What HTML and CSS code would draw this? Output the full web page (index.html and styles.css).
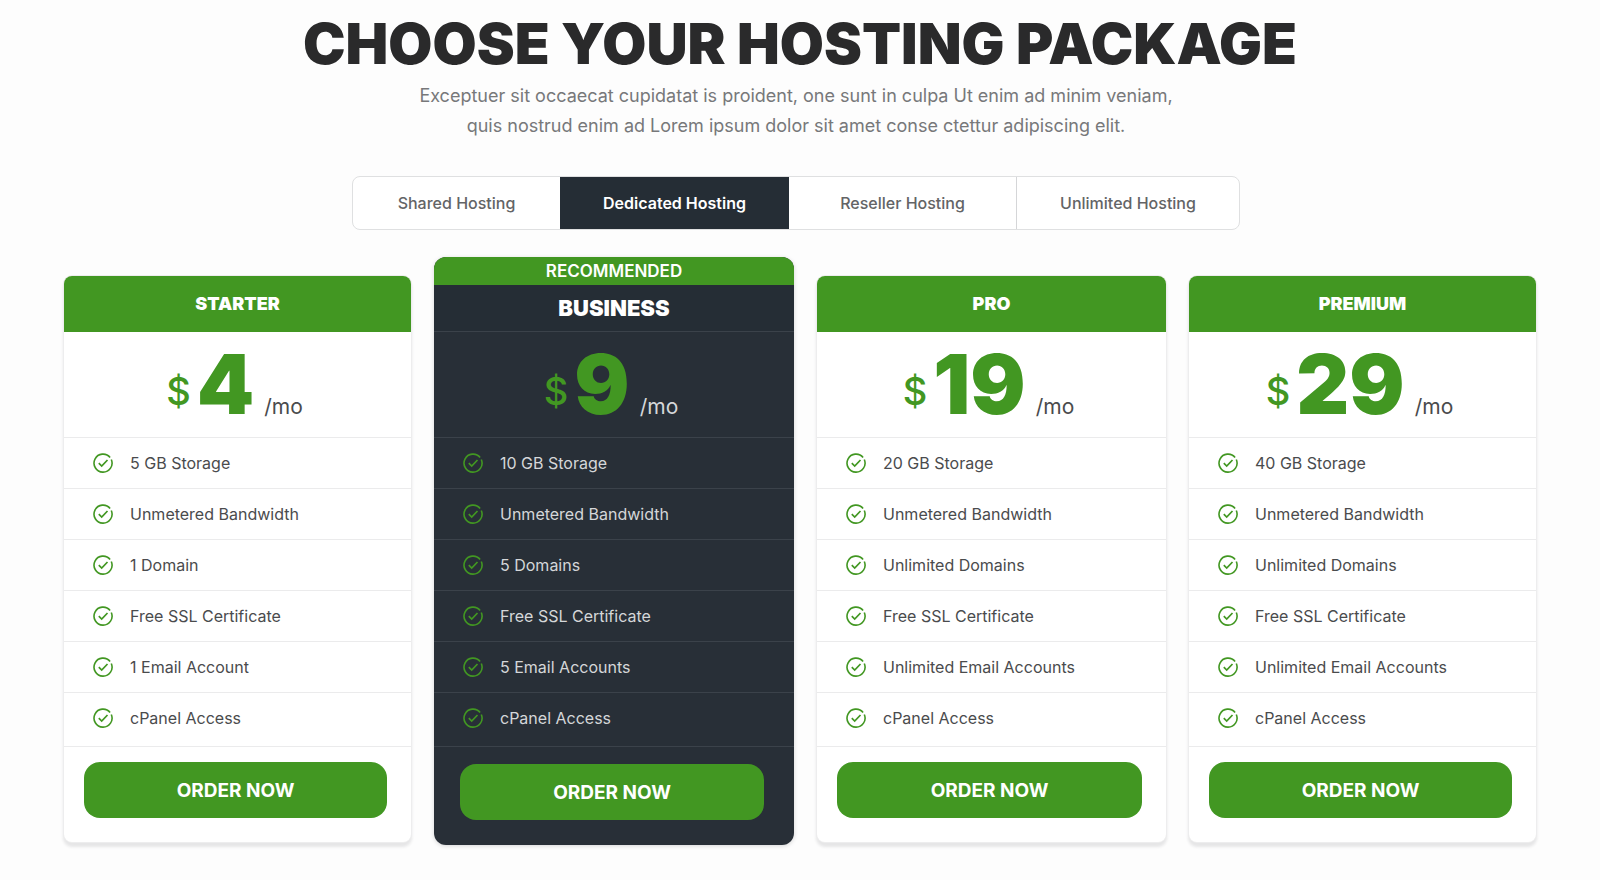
FILE: index.html
```
<!DOCTYPE html>
<html lang="en">
<head>
    <meta charset="UTF-8">
    <meta name="viewport" content="width=device-width, initial-scale=1.0">
    <title>Hosting Packages</title>
    <link rel="stylesheet" href="styles.css">
</head>
<body>
    <!-- Check icon shared by all feature rows -->
    <svg class="sprite" aria-hidden="true">
        <symbol id="check" viewBox="0 0 20 20">
            <path d="M18.3 6.5A9 9 0 1 1 17.1 4.5" fill="none" stroke="currentColor" stroke-width="1.6"/>
            <path d="M5.8 10.2l2.9 2.8 5.8-6" fill="none" stroke="currentColor" stroke-width="1.7"/>
        </symbol>
    </svg>

    <div class="wrapper">
        <h1>CHOOSE YOUR HOSTING PACKAGE</h1>

        <div class="intro">
            <p>Exceptuer sit occaecat cupidatat is proident, one sunt in culpa Ut enim ad minim veniam,<br>
            quis nostrud enim ad Lorem ipsum dolor sit amet conse ctettur adipiscing elit.</p>

            <div class="tabs">
                <button class="tab">Shared Hosting</button>
                <button class="tab tab-active">Dedicated Hosting</button>
                <button class="tab">Reseller Hosting</button>
                <button class="tab">Unlimited Hosting</button>
            </div>
        </div>

        <div class="plans">
            <!-- Starter -->
            <div class="plan">
                <h2>STARTER</h2>
                <div class="price"><span class="currency">$</span><span class="amount">4</span><span class="period">/mo</span></div>
                <ul class="features">
                    <li><svg class="icon"><use href="#check"/></svg>5 GB Storage</li>
                    <li><svg class="icon"><use href="#check"/></svg>Unmetered Bandwidth</li>
                    <li><svg class="icon"><use href="#check"/></svg>1 Domain</li>
                    <li><svg class="icon"><use href="#check"/></svg>Free SSL Certificate</li>
                    <li><svg class="icon"><use href="#check"/></svg>1 Email Account</li>
                    <li><svg class="icon"><use href="#check"/></svg>cPanel Access</li>
                </ul>
                <button class="order">ORDER NOW</button>
            </div>

            <!-- Business -->
            <div class="plan plan-featured">
                <div class="ribbon">RECOMMENDED</div>
                <h2>BUSINESS</h2>
                <div class="price"><span class="currency">$</span><span class="amount">9</span><span class="period">/mo</span></div>
                <ul class="features">
                    <li><svg class="icon"><use href="#check"/></svg>10 GB Storage</li>
                    <li><svg class="icon"><use href="#check"/></svg>Unmetered Bandwidth</li>
                    <li><svg class="icon"><use href="#check"/></svg>5 Domains</li>
                    <li><svg class="icon"><use href="#check"/></svg>Free SSL Certificate</li>
                    <li><svg class="icon"><use href="#check"/></svg>5 Email Accounts</li>
                    <li><svg class="icon"><use href="#check"/></svg>cPanel Access</li>
                </ul>
                <button class="order">ORDER NOW</button>
            </div>

            <!-- Pro -->
            <div class="plan">
                <h2>PRO</h2>
                <div class="price"><span class="currency">$</span><span class="amount">19</span><span class="period">/mo</span></div>
                <ul class="features">
                    <li><svg class="icon"><use href="#check"/></svg>20 GB Storage</li>
                    <li><svg class="icon"><use href="#check"/></svg>Unmetered Bandwidth</li>
                    <li><svg class="icon"><use href="#check"/></svg>Unlimited Domains</li>
                    <li><svg class="icon"><use href="#check"/></svg>Free SSL Certificate</li>
                    <li><svg class="icon"><use href="#check"/></svg>Unlimited Email Accounts</li>
                    <li><svg class="icon"><use href="#check"/></svg>cPanel Access</li>
                </ul>
                <button class="order">ORDER NOW</button>
            </div>

            <!-- Premium -->
            <div class="plan">
                <h2>PREMIUM</h2>
                <div class="price"><span class="currency">$</span><span class="amount">29</span><span class="period">/mo</span></div>
                <ul class="features">
                    <li><svg class="icon"><use href="#check"/></svg>40 GB Storage</li>
                    <li><svg class="icon"><use href="#check"/></svg>Unmetered Bandwidth</li>
                    <li><svg class="icon"><use href="#check"/></svg>Unlimited Domains</li>
                    <li><svg class="icon"><use href="#check"/></svg>Free SSL Certificate</li>
                    <li><svg class="icon"><use href="#check"/></svg>Unlimited Email Accounts</li>
                    <li><svg class="icon"><use href="#check"/></svg>cPanel Access</li>
                </ul>
                <button class="order">ORDER NOW</button>
            </div>
        </div>
    </div>
</body>
</html>
```
FILE: styles.css
```
* {
    box-sizing: border-box;
}
body {
    font-family: Inter, "Liberation Sans", sans-serif;
    background-color: #fdfdfd;
    color: #4a4b4d;
    margin: 0;
}
button {
    font-family: inherit;
    cursor: pointer;
}
.sprite {
    display: none;
}
.wrapper {
    padding: 12px 64px 32px;
}
h1 {
    margin: 0;
    font-size: 57px;
    line-height: 64px;
    font-weight: 900;
    color: #2a2a2b;
    text-align: center;
}
.intro {
    padding-right: 8px;
    text-align: center;
}
.intro p {
    margin: 5px 0 35px;
    font-size: 18px;
    line-height: 30px;
    color: #77787a;
}
.tabs {
    display: grid;
    grid-template-columns: 207fr 229fr 227fr 223fr;
    max-width: 888px;
    height: 54px;
    margin: 0 auto;
    border: 1px solid #dfe0e1;
    border-radius: 8px;
    background: #fff;
}
.tab {
    padding: 0;
    border: none;
    background: none;
    font-size: 16px;
    font-weight: 500;
    color: #636466;
}
.tab:last-child {
    border-left: 1px solid #d5d6d8;
}
.tab-active {
    background: #252d35;
    color: #fff;
    font-weight: 600;
}
.plans {
    display: grid;
    grid-template-columns: 347fr 360fr 349fr 347fr;
    gap: 23px;
    align-items: end;
    margin-top: 27px;
}
.plan {
    display: flex;
    flex-direction: column;
    margin-bottom: 3px;
    border-radius: 8px;
    background: #fff;
    box-shadow: 0 0 0 1px #ededee, 0 4px 3px 1px #e6e6e7;
    overflow: hidden;
}
.plan h2 {
    margin: 0;
    background: #429722;
    color: #fff;
    font-size: 18px;
    line-height: 56px;
    font-weight: 900;
    text-align: center;
}
.price {
    display: flex;
    justify-content: center;
    align-items: baseline;
    height: 105px;
    padding-right: 6px;
    line-height: 105px;
    color: #429722;
}
.currency {
    align-self: flex-start;
    margin-right: 6px;
    font-size: 38px;
    line-height: 118px;
    font-weight: 500;
}
.amount {
    font-size: 82px;
    font-weight: 900;
}
.period {
    margin-left: 10px;
    font-size: 21px;
    color: #4a4b4d;
}
.features {
    margin: 0;
    padding: 0;
    list-style: none;
    border-bottom: 1px solid #ebebec;
}
.features li {
    display: flex;
    align-items: center;
    gap: 17px;
    height: 51px;
    padding-left: 29px;
    border-top: 1px solid #ebebec;
    font-size: 16px;
}
.features li:last-child {
    height: 54px;
    padding-bottom: 4px;
}
.icon {
    width: 20px;
    height: 20px;
    color: #429722;
}
.order {
    height: 56px;
    margin: 15px 24px 24px 20px;
    border: none;
    border-radius: 16px;
    background: #429722;
    color: #fff;
    font-size: 19px;
    font-weight: 700;
}
.plan-featured {
    margin-bottom: 0;
    border-radius: 12px;
    background: #282f37;
    color: #d5d7d9;
    box-shadow: 0 1px 4px #d5d5d6;
}
.ribbon {
    background: #429722;
    color: #fff;
    font-size: 17px;
    line-height: 28px;
    font-weight: 600;
    text-align: center;
}
.plan-featured h2 {
    background: #252d35;
    border-bottom: 1px solid #3b424a;
    font-size: 22px;
    line-height: 46px;
}
.plan-featured .period {
    color: #d5d7d9;
}
.plan-featured .features,
.plan-featured .features li {
    border-color: #3b424a;
}
.plan-featured .order {
    margin: 17px 30px 25px 26px;
}
```
